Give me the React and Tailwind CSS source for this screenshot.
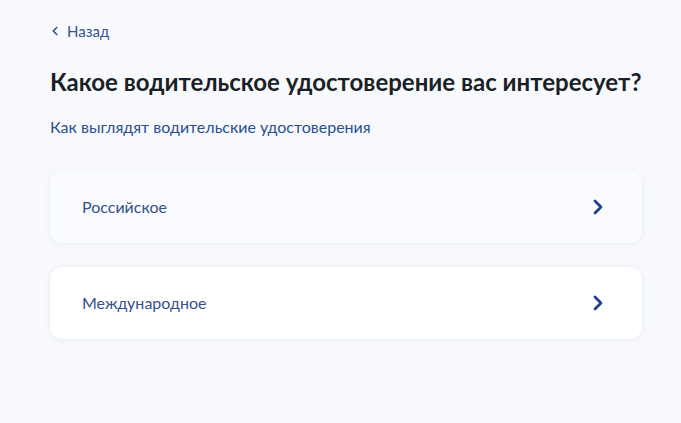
import { ChevronLeft, ChevronRight } from 'lucide-react'

const options = [
    { label: 'Российское', tint: true },
    { label: 'Международное', tint: false },
]

export default function App() {
    return (
        <div className="min-h-[423px] w-full bg-[#f7f9fc] font-['Lato',sans-serif] text-[#0b1f33]">
            <div className="px-[50px] pt-[21px]">
                <button className="flex items-center gap-[5px] text-[15px] leading-5 text-[#36538f]">
                    <ChevronLeft size={14} strokeWidth={2.75} className="-ml-[2px] text-[#2c4f8f]" />
                    <span>Назад</span>
                </button>

                <h1 className="mt-[25px] whitespace-nowrap text-[24px] font-bold leading-8 text-[#1b1f26]">
                    Какое водительское удостоверение вас интересует?
                </h1>

                <a className="mt-[17px] block text-[16px] leading-6 text-[#2c4f8f]">
                    Как выглядят водительские удостоверения
                </a>

                <div className="mt-[32px] flex w-[592px] flex-col gap-[24px]">
                    {options.map((o) => (
                        <div
                            key={o.label}
                            className={`flex h-[72px] items-center justify-between rounded-[12px] pl-[32px] pr-[32px] shadow-[0_1px_6px_rgba(40,60,120,0.08)] ${o.tint ? 'bg-[#f9fbfe]' : 'bg-white'}`}
                        >
                            <span className="text-[16px] text-[#36508a]">{o.label}</span>
                            <ChevronRight size={24} strokeWidth={2.75} className="text-[#1d3f8f]" />
                        </div>
                    ))}
                </div>
            </div>
        </div>
    )
}
